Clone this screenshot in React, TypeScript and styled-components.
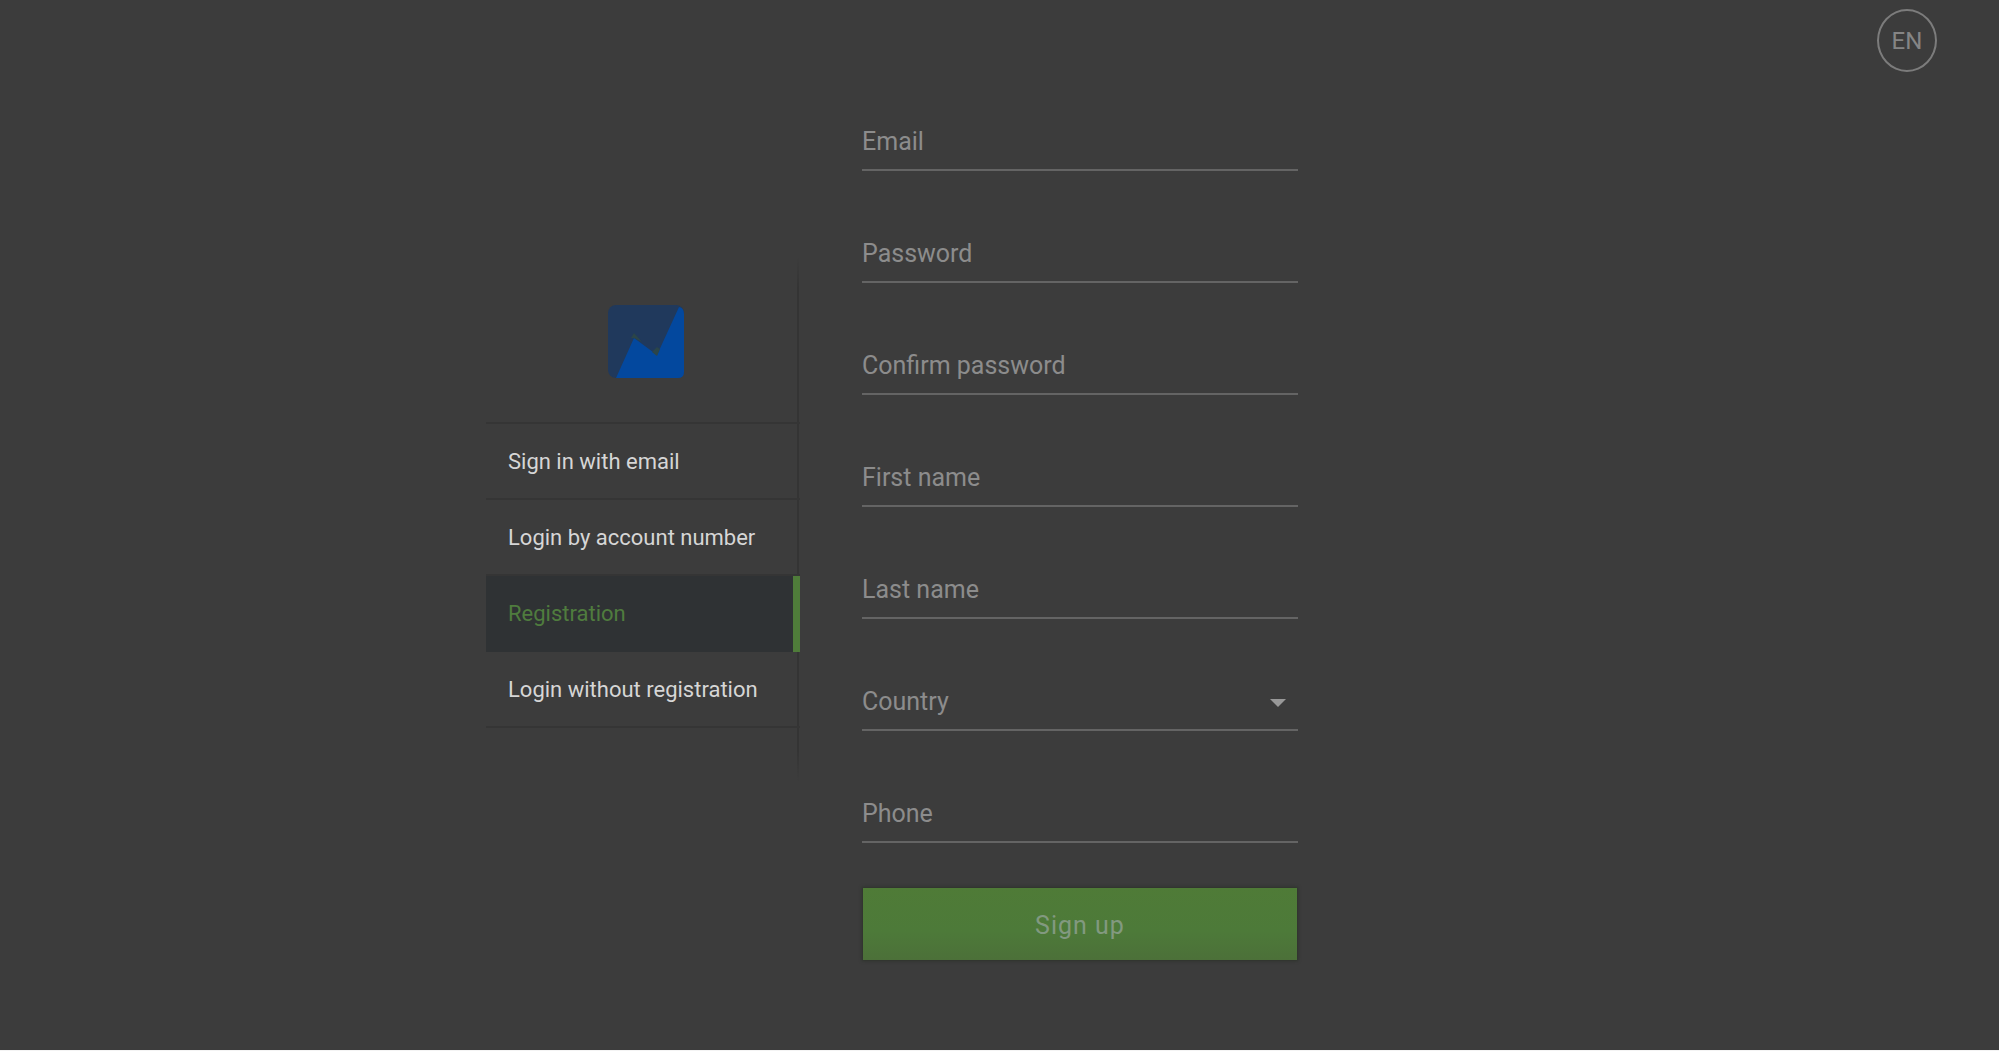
import React from "react";
import styled, { createGlobalStyle } from "styled-components";

const GlobalStyle = createGlobalStyle`
  *, *::before, *::after { box-sizing: border-box; }
  body {
    margin: 0;
    background: #3c3c3c;
    font-family: Roboto, "Liberation Sans", sans-serif;
  }
`;

const Page = styled.div`
  display: grid;
  grid-template-columns: minmax(80px, 1fr) minmax(0, 1027px) minmax(80px, 1fr);
  min-height: 100vh;
  border-bottom: 1px solid #f4f4f4;
  background: #3c3c3c;
`;

const Panel = styled.main`
  grid-column: 2;
  display: flex;
  align-items: flex-start;
  padding: 59px 0 58px;
`;

const Sidebar = styled.aside`
  flex: 0 0 314px;
  margin-top: 198px;
  padding-bottom: 54px;
  background: linear-gradient(transparent, #343434 6%, #343434 94%, transparent) right 1px top / 2px 100% no-repeat;
`;

const Brand = styled.div`
  display: flex;
  justify-content: center;
  padding: 48px 0 44px 6px;
`;

const Menu = styled.nav`
  display: flex;
  flex-direction: column;
  border-top: 2px solid #353535;
`;

const MenuLink = styled.a<{ $active?: boolean }>`
  display: flex;
  align-items: center;
  min-height: 76px;
  padding: 1px 0 0 22px;
  border-bottom: 2px solid ${(p) => (p.$active ? "transparent" : "#353535")};
  background: ${(p) =>
    p.$active ? "linear-gradient(#4f7c3a, #4f7c3a) right / 7px 100% repeat-y, #2f3234" : "none"};
  color: ${(p) => (p.$active ? "#4f7c3e" : "#d6d6d6")};
  font-size: 22px;
  text-decoration: none;
`;

const Form = styled.form`
  display: flex;
  flex-direction: column;
  flex: 0 1 436px;
  margin-left: 62px;
`;

const Field = styled.label`
  display: flex;
  align-items: flex-end;
  height: 112px;
  border-bottom: 2px solid #646464;
`;

const Input = styled.input`
  width: 100%;
  height: 56px;
  padding: 1px 0 0;
  border: 0;
  outline: 0;
  background: none;
  color: #8c8c8c;
  font: 400 25px Roboto, "Liberation Sans", sans-serif;
  &::placeholder { color: #8c8c8c; opacity: 1; }
`;

const SelectField = styled(Field)`
  padding-right: 12px;
  svg { flex: none; margin-bottom: 22px; }
`;

const Select = styled.select`
  flex: 1;
  height: 56px;
  padding: 1px 0 0;
  border: 0;
  outline: 0;
  appearance: none;
  background: none;
  color: #8c8c8c;
  font: 400 25px Roboto, "Liberation Sans", sans-serif;
`;

const Submit = styled.button`
  height: 72px;
  margin: 45px 1px 0;
  padding: 2px 0 0;
  border: 0;
  background: linear-gradient(#4f7b37, #4d7a39 60%, #4c7039);
  box-shadow: 0 0 3px 1px #2d332b;
  color: #829980;
  font: 400 25px Roboto, "Liberation Sans", sans-serif;
  letter-spacing: 1px;
`;

const Language = styled.button`
  grid-column: 3;
  justify-self: end;
  width: 60px;
  height: 63px;
  margin: 9px 62px 0 0;
  padding: 0;
  border: 2px solid #7c7c7c;
  border-radius: 50%;
  background: none;
  color: #858585;
  font: 400 24px Roboto, "Liberation Sans", sans-serif;
`;

const Logo = () => (
  <svg width="76" height="73" viewBox="0 0 76 73" role="img" aria-label="Logo">
    <rect width="76" height="73" rx="8" fill="#20395c" />
    <path d="M8 73 26 33 49 50 71 2Q76 3 76 9V67Q76 73 70 73Z" fill="#03489e" />
    <path d="M23 33 26 28 34 37 26 33ZM44 47 49 42 52 44 49 51Z" fill="#2b4549" />
  </svg>
);

const Arrow = () => (
  <svg width="16" height="8" viewBox="0 0 16 8" aria-hidden="true">
    <path d="M0 0H16L8 8Z" fill="#989898" />
  </svg>
);

const menu = ["Sign in with email", "Login by account number", "Registration", "Login without registration"];

const fields = [
  { label: "Email", type: "email" },
  { label: "Password", type: "password" },
  { label: "Confirm password", type: "password" },
  { label: "First name", type: "text" },
  { label: "Last name", type: "text" },
];

const TextField = ({ label, type }: { label: string; type: string }) => (
  <Field>
    <Input type={type} placeholder={label} aria-label={label} />
  </Field>
);

export default function App() {
  return (
    <>
      <GlobalStyle />
      <Page>
        <Panel>
          <Sidebar>
            <Brand>
              <Logo />
            </Brand>
            <Menu>
              {menu.map((item) => (
                <MenuLink
                  key={item}
                  href="#"
                  $active={item === "Registration"}
                  aria-current={item === "Registration" ? "page" : undefined}
                >
                  {item}
                </MenuLink>
              ))}
            </Menu>
          </Sidebar>
          <Form onSubmit={(e) => e.preventDefault()}>
            {fields.map((f) => (
              <TextField key={f.label} {...f} />
            ))}
            <SelectField>
              <Select aria-label="Country" defaultValue="">
                <option value="">Country</option>
              </Select>
              <Arrow />
            </SelectField>
            <TextField label="Phone" type="tel" />
            <Submit type="submit">Sign up</Submit>
          </Form>
        </Panel>
        <Language type="button" aria-label="Language: EN">EN</Language>
      </Page>
    </>
  );
}
